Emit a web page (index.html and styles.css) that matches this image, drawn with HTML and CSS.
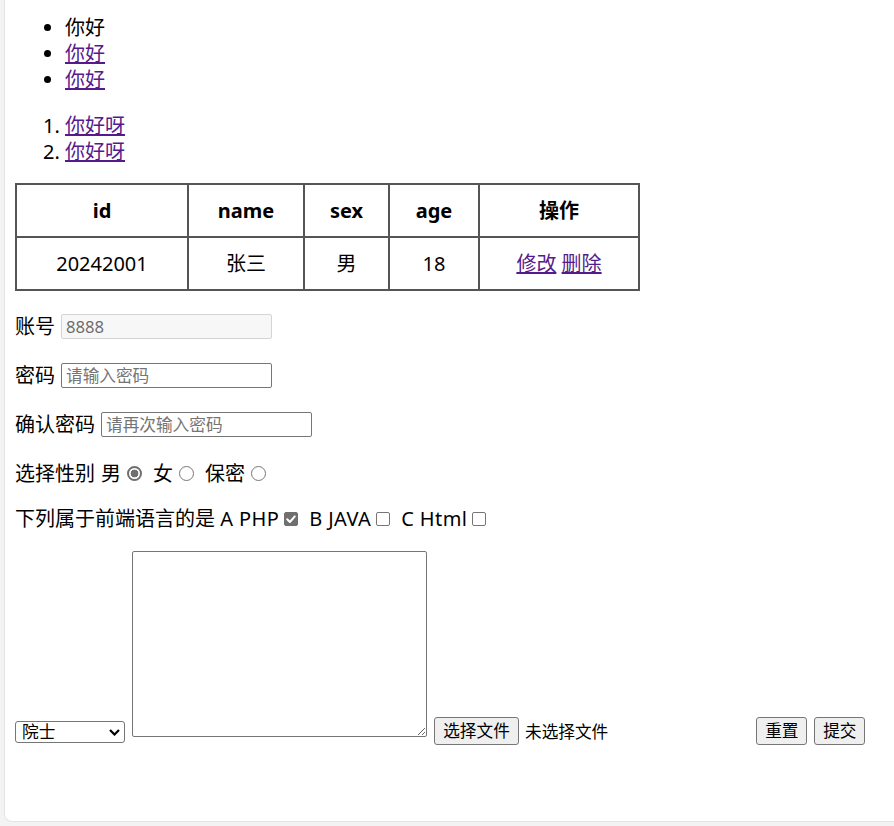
FILE: index.html
```html
<!DOCTYPE html>
<html lang="zh-CN">
<head>
<meta charset="utf-8">
<title>表单练习</title>
<link rel="stylesheet" href="styles.css">
</head>
<body>
<div class="window">
  <ul class="list">
    <li>你好</li>
    <li><a href="#">你好</a></li>
    <li><a href="#">你好</a></li>
  </ul>
  <ol class="list list-num">
    <li><a href="#">你好呀</a></li>
    <li><a href="#">你好呀</a></li>
  </ol>
  <table class="grid">
    <thead>
      <tr>
        <th class="c-id">id</th>
        <th class="c-name">name</th>
        <th class="c-sex">sex</th>
        <th class="c-age">age</th>
        <th class="c-op">操作</th>
      </tr>
    </thead>
    <tbody>
      <tr>
        <td>20242001</td>
        <td>张三</td>
        <td>男</td>
        <td>18</td>
        <td><a href="#">修改</a> <a href="#">删除</a></td>
      </tr>
    </tbody>
  </table>
  <form class="form">
    <div class="row row-first">
      <label for="acc">账号</label>
      <input id="acc" class="text" type="text" value="8888" disabled>
    </div>
    <div class="row">
      <label for="pwd">密码</label>
      <input id="pwd" class="text" type="password" placeholder="请输入密码">
    </div>
    <div class="row">
      <label for="pwd2">确认密码</label>
      <input id="pwd2" class="text" type="password" placeholder="请再次输入密码">
    </div>
    <div class="row row-radio">
      <span>选择性别</span>
      <span class="opt opt-first">男</span><input class="radio" type="radio" name="sex" checked>
      <span class="opt">女</span><input class="radio" type="radio" name="sex">
      <span class="opt">保密</span><input class="radio" type="radio" name="sex">
    </div>
    <div class="row row-check">
      <span>下列属于前端语言的是 <span class="latin">A PHP</span></span>
      <span class="box"><input class="check" type="checkbox" checked><svg class="tick" viewBox="0 0 14 14" width="14" height="14"><polyline points="3.2,7.3 5.9,10 10.8,4.4" fill="none" stroke="#fff" stroke-width="2" stroke-linecap="round" stroke-linejoin="round"/></svg></span>
      <span class="opt latin">B JAVA</span>
      <span class="box"><input class="check" type="checkbox"></span>
      <span class="opt latin">C Html</span>
      <span class="box"><input class="check" type="checkbox"></span>
    </div>
    <div class="row-last">
      <div class="select-wrap">
        <select class="select">
          <option>院士</option>
          <option>博士</option>
          <option>硕士</option>
        </select>
        <svg class="chevron" viewBox="0 0 11 7" width="11" height="7"><polyline points="1,1 5.5,5.5 10,1" fill="none" stroke="#000" stroke-width="2.2"/></svg>
      </div>
      <textarea class="area"></textarea>
      <button type="button" class="btn btn-file">选择文件</button>
      <span class="file-name">未选择文件</span>
      <button type="reset" class="btn btn-reset">重置</button>
      <button type="submit" class="btn btn-submit">提交</button>
    </div>
  </form>
</div>
</body>
</html>
```

FILE: styles.css
```css
* {
  box-sizing: border-box;
}

html,
body {
  margin: 0;
  padding: 0;
}

body {
  background: #f3f3f3;
  font-family: "Noto Sans", "Noto Sans CJK SC", sans-serif;
  font-size: 20px;
  color: #000;
  overflow: hidden;
}

.window {
  margin-left: 4px;
  height: 822px;
  background: #fff;
  border-left: 1px solid #e4e4e4;
  border-bottom: 1px solid #e4e4e4;
  border-bottom-left-radius: 8px;
  padding: 15px 0 0 10px;
}

a {
  color: #551a8b;
  text-decoration: underline;
}

.list {
  margin: 0 0 20px;
  padding-left: 50px;
  line-height: 26px;
}

.list-num {
  margin-bottom: 18px;
}

.latin {
  letter-spacing: 0.4px;
}

.grid {
  border-collapse: separate;
  border-spacing: 0;
  border-top: 2px solid #555;
  border-left: 2px solid #555;
  margin: 0 0 21px;
}

.grid th,
.grid td {
  box-sizing: content-box;
  border-right: 2px solid #555;
  border-bottom: 2px solid #555;
  padding: 12px 0;
  line-height: 27px;
  text-align: center;
  font-size: 20px;
}

.grid th {
  font-weight: 700;
}

.c-id { width: 170px; }
.c-name { width: 114px; }
.c-sex { width: 83px; }
.c-age { width: 88px; }
.c-op { width: 158px; }

.form {
  margin: 0;
}

.row {
  display: flex;
  align-items: center;
  height: 29px;
  margin: 0 0 20px;
  line-height: 26px;
  white-space: nowrap;
}

.row-radio {
  margin-bottom: 18px;
}

.row-check {
  height: 26px;
  margin-bottom: 19px;
}

.text {
  width: 211px;
  height: 25px;
  margin: 0 0 0 6px;
  padding: 0 4px;
  border: 1px solid #767676;
  border-radius: 2px;
  background: #fff;
  font-family: "Noto Sans", "Noto Sans CJK SC", sans-serif;
  font-size: 16.67px;
  color: #000;
  outline: none;
}

.text::placeholder {
  color: #757575;
}

.text:disabled {
  background: #f7f7f7;
  border-color: #d4d4d4;
  color: #6d6d6d;
}

.opt {
  margin-left: 11px;
}

.opt-first {
  margin-left: 6px;
}

.radio {
  appearance: none;
  -webkit-appearance: none;
  width: 15px;
  height: 15px;
  margin: 0 0 0 6px;
  border: 1px solid #767676;
  border-radius: 50%;
  background: #fff;
}

.radio:checked {
  border: 2px solid #6f6f6f;
  background: radial-gradient(circle, #6f6f6f 0 3.6px, #fff 4.2px);
}

.box {
  position: relative;
  display: inline-flex;
  width: 14px;
  height: 14px;
  margin-left: 5px;
}

.check {
  appearance: none;
  -webkit-appearance: none;
  width: 14px;
  height: 14px;
  margin: 0;
  border: 1px solid #767676;
  border-radius: 2px;
  background: #fff;
}

.check:checked {
  background: #6f6f6f;
  border-color: #6f6f6f;
}

.tick {
  position: absolute;
  left: 0;
  top: 0;
  pointer-events: none;
}

.row-last {
  display: flex;
  align-items: flex-end;
  white-space: nowrap;
}

.select-wrap {
  position: relative;
  width: 110px;
  height: 22px;
  margin-bottom: 2px;
}

.select {
  appearance: none;
  -webkit-appearance: none;
  display: block;
  width: 100%;
  height: 100%;
  margin: 0;
  padding: 0 0 0 6px;
  border: 1px solid #767676;
  border-radius: 3px;
  background: #fff;
  font-family: "Noto Sans", "Noto Sans CJK SC", sans-serif;
  font-size: 16.67px;
  line-height: 20px;
  color: #000;
}

.chevron {
  position: absolute;
  right: 5px;
  top: 8px;
  pointer-events: none;
}

.area {
  display: block;
  width: 295px;
  height: 186px;
  margin: 0 0 8px 7px;
  border: 1px solid #767676;
  border-radius: 2px;
  background: #fff;
  resize: both;
}

.btn {
  height: 28px;
  margin: 0;
  padding: 0;
  border: 1px solid #767676;
  border-radius: 3px;
  background: #efefef;
  font-family: "Noto Sans", "Noto Sans CJK SC", sans-serif;
  font-size: 16.67px;
  line-height: 24px;
  color: #000;
  text-align: center;
}

.btn-file {
  width: 85px;
  margin-left: 7px;
}

.file-name {
  margin-left: 6px;
  font-size: 16.67px;
  line-height: 26px;
}

.btn-reset {
  width: 51px;
  margin-left: 148px;
}

.btn-submit {
  width: 51px;
  margin-left: 7px;
}
```
